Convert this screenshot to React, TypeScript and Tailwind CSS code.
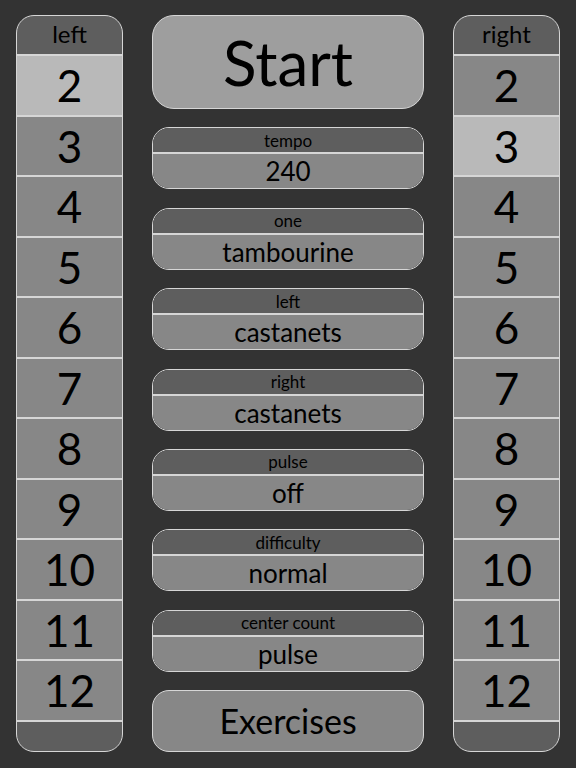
const numbers = ["2", "3", "4", "5", "6", "7", "8", "9", "10", "11", "12"];

const settings = [
  { label: "tempo", value: "240" },
  { label: "one", value: "tambourine" },
  { label: "left", value: "castanets" },
  { label: "right", value: "castanets" },
  { label: "pulse", value: "off" },
  { label: "difficulty", value: "normal" },
  { label: "center count", value: "pulse" },
];

const Column = ({ title, active }: { title: string; active: string }) => (
  <div className="w-[107px] h-full flex flex-col rounded-[18px] border-[1.5px] border-[#d6d6d6] overflow-hidden bg-[#5e5e5e]">
    <div className="h-[38px] flex items-center justify-center text-[24px] leading-none pb-[3px] text-black">
      {title}
    </div>
    {numbers.map((n) => (
      <div
        key={n}
        className={
          "h-[60.5px] flex items-center justify-center border-t-2 border-[#d6d6d6] text-[44px] leading-none text-black " +
          (n === active ? "bg-[#b9b9b9]" : "bg-[#878787]")
        }
      >
        {n}
      </div>
    ))}
    <div className="flex-1 border-t-2 border-[#d6d6d6]" />
  </div>
);

const App = () => {
  return (
    <main
      className="w-[576px] h-[768px] bg-[#333333] flex pl-[16px] pt-[15px] pb-[16px] gap-[29px]"
      style={{ fontFamily: "Lato, 'Open Sans', sans-serif" }}
    >
      <Column title="left" active="2" />

      <div className="w-[272px] h-full flex flex-col justify-between">
        {/* start button */}
        <div className="h-[94px] rounded-[22px] border-[1.5px] border-[#d6d6d6] bg-[#9e9e9e] flex items-center justify-center text-[62px] leading-none text-black">
          Start
        </div>

        {settings.map(({ label, value }) => (
          <div
            key={label}
            className="h-[62px] rounded-[17px] border-[1.5px] border-[#d6d6d6] overflow-hidden flex flex-col"
          >
            <div className="h-[24px] bg-[#5e5e5e] flex items-center justify-center text-[17px] leading-none text-black">
              {label}
            </div>
            <div className="flex-1 bg-[#878787] border-t-2 border-[#d6d6d6] flex items-center justify-center text-[26px] leading-none text-black">
              {value}
            </div>
          </div>
        ))}

        <div className="h-[62px] rounded-[17px] border-[1.5px] border-[#d6d6d6] bg-[#878787] flex items-center justify-center text-[34px] leading-none text-black">
          Exercises
        </div>
      </div>

      <Column title="right" active="3" />
    </main>
  );
};

export default App;
